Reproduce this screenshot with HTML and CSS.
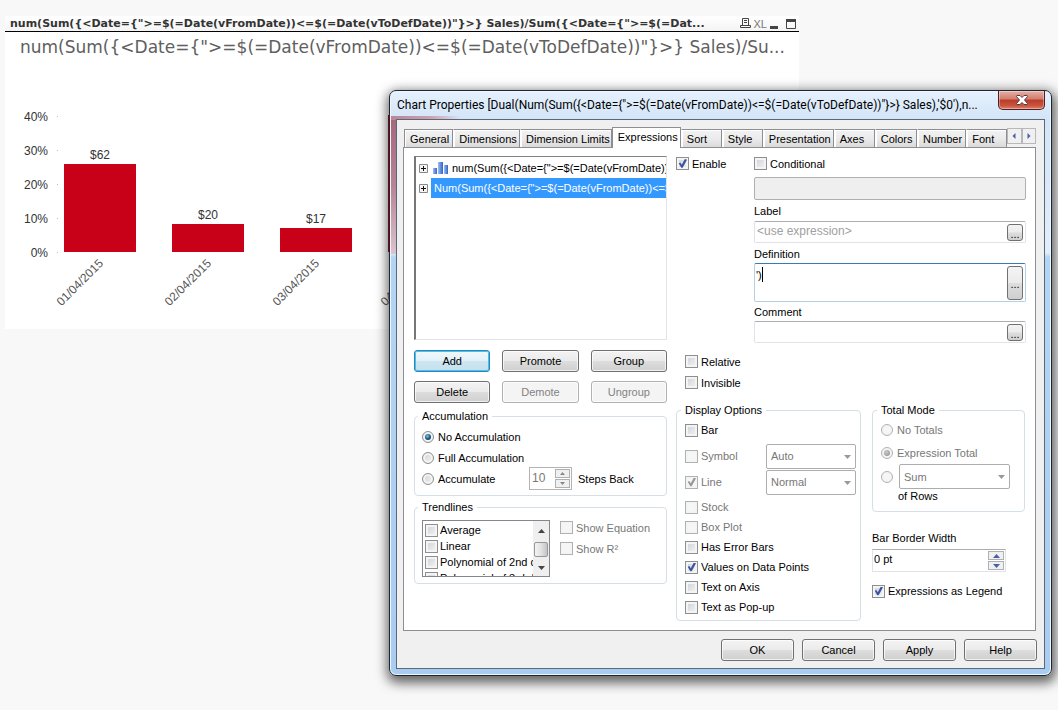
FILE: index.html
```html
<!DOCTYPE html>
<html lang="en">
<head>
<meta charset="utf-8">
<title>Chart Properties</title>
<link rel="stylesheet" href="styles.css">
</head>
<body>
<section class="chart">
  <header class="caption">
    <h1 class="caption-text">num(Sum({&lt;Date={"&gt;=$(=Date(vFromDate))&lt;=$(=Date(vToDefDate))"}&gt;} Sales)/Sum({&lt;Date={"&gt;=$(=Dat...</h1>
    <svg class="caption-icon" width="11" height="11" viewBox="0 0 11 11" fill="none" stroke="#444"><path d="M2.500 7V.5H8.500V7M4 2.500H7M4 4.500H7M.5 7.500H10.500V9.500H.5Z"/></svg>
    <span class="xl">XL</span>
    <svg class="caption-icon wide" width="27" height="11" viewBox="0 0 27 11"><path d="M0 8H8V11H0Z" fill="#444"/><path d="M16.500 2V10.500H25.500V2" fill="none" stroke="#444"/><path d="M16 1H26V4H16Z" fill="#444"/></svg>
  </header>
  <h2 class="chart-title">num(Sum({&lt;Date={"&gt;=$(=Date(vFromDate))&lt;=$(=Date(vToDefDate))"}&gt;} Sales)/Su...</h2>
  <svg class="plot" width="480" height="265" viewBox="5 64 480 265">
    <g fill="#c80018"><path d="M64 164H136V252H64ZM172 224H244V252H172ZM280 228H352V252H280ZM388 115H460V252H388Z"/></g>
    <path d="M57 116.500H58M57 150.500H58M57 184.500H58M57 218.500H58M57 252.500H58" stroke="#bbb"/>
    <g class="axis" text-anchor="end"><text x="48" y="121">40%</text><text x="48" y="155">30%</text><text x="48" y="189">20%</text><text x="48" y="223">10%</text><text x="48" y="257">0%</text></g>
    <g class="axis" text-anchor="middle"><text x="100" y="159">$62</text><text x="208" y="219">$20</text><text x="316" y="223">$17</text></g>
    <g class="dates" text-anchor="end"><text transform="translate(104 264) rotate(-45)">01/04/2015</text><text transform="translate(212 264) rotate(-45)">02/04/2015</text><text transform="translate(320 264) rotate(-45)">03/04/2015</text><text transform="translate(428 264) rotate(-45)">04/04/2015</text></g>
  </svg>
</section>

<main class="dialog">
  <header class="titlebar">
    <h2 class="title">Chart Properties [Dual(Num(Sum({&lt;Date={"&gt;=$(=Date(vFromDate))&lt;=$(=Date(vToDefDate))"}&gt;} Sales),'$0'),n...</h2>
    <button class="close" aria-label="Close"><svg width="14" height="10" viewBox="0 0 14 10"><path d="M2 .5H5L7 2.500L9 .5H12L12.500 1.500L9.500 5L12.500 8.500L12 9.500H9L7 7.500L5 9.500H2L1.500 8.500L4.500 5L1.500 1.500Z" fill="#fff" stroke="#57394a"/></svg></button>
  </header>
  <div class="client">
    <nav class="tabs">
      <button class="tab">General</button><button class="tab">Dimensions</button><button class="tab">Dimension Limits</button><button class="tab selected">Expressions</button><button class="tab">Sort</button><button class="tab">Style</button><button class="tab">Presentation</button><button class="tab">Axes</button><button class="tab">Colors</button><button class="tab">Number</button><button class="tab">Font</button>
      <button class="arrow" aria-label="Scroll tabs left"><svg width="4" height="6"><path d="M3.500 0V6L.5 3Z" fill="#4b5fa8"/></svg></button><button class="arrow" aria-label="Scroll tabs right"><svg width="4" height="6"><path d="M.5 0V6L3.500 3Z" fill="#4b5fa8"/></svg></button>
    </nav>
    <div class="page">
      <div class="left">
        <ul class="tree">
          <li><svg width="9" height="9" viewBox="0 0 9 9"><path d="M.5.5H8.500V8.500H.5Z" fill="#f4f4f4" stroke="#888"/><path d="M2 4.500H7M4.500 2V7" stroke="#111"/></svg><svg class="bars" width="15" height="12" viewBox="0 0 15 12"><defs><linearGradient id="blue" x2="1" y2="0"><stop offset="0" stop-color="#9cc0f5"/><stop offset="1" stop-color="#2f63c4"/></linearGradient></defs><g fill="url(#blue)"><path d="M0 6H4V12H0Z"/><path d="M5 0H10V12H5Z"/><path d="M11 3H15V12H11Z"/></g></svg><span class="expr">num(Sum({&lt;Date={"&gt;=$(=Date(vFromDate))&lt;=$(=Date(vToDefDate))"}&gt;} Sales)</span></li>
          <li><svg width="9" height="9" viewBox="0 0 9 9"><path d="M.5.5H8.500V8.500H.5Z" fill="#f4f4f4" stroke="#888"/><path d="M2 4.500H7M4.500 2V7" stroke="#111"/></svg><span class="expr current">Num(Sum({&lt;Date={"&gt;=$(=Date(vFromDate))&lt;=$(=Date(vToDefDate))"}&gt;} Sales)</span></li>
        </ul>
        <div class="actions">
          <button class="btn default">Add</button><button class="btn">Promote</button><button class="btn">Group</button>
          <button class="btn">Delete</button><button class="btn" disabled>Demote</button><button class="btn" disabled>Ungroup</button>
        </div>
        <fieldset class="group accumulation">
          <legend>Accumulation</legend>
          <label class="opt"><input type="radio" name="acc" checked>No Accumulation</label>
          <label class="opt"><input type="radio" name="acc">Full Accumulation</label>
          <div class="row">
            <label class="opt grow"><input type="radio" name="acc">Accumulate</label>
            <div class="spin off"><input id="steps" type="text" value="10" disabled><span class="steppers"><button disabled aria-label="More"><svg width="5" height="3"><path d="M0 3H5L2.500 0Z"/></svg></button><button disabled aria-label="Fewer"><svg width="5" height="3"><path d="M0 0H5L2.500 3Z"/></svg></button></span></div>
            <label class="steps" for="steps">Steps Back</label>
          </div>
        </fieldset>
        <fieldset class="group trend">
          <legend>Trendlines</legend>
          <div class="row trend-row">
            <div class="list">
              <div class="list-items">
                <label class="opt"><input type="checkbox">Average</label>
                <label class="opt"><input type="checkbox">Linear</label>
                <label class="opt"><input type="checkbox">Polynomial of 2nd d</label>
                <label class="opt"><input type="checkbox">Polynomial of 3rd d</label>
              </div>
              <div class="scroll"><svg width="7" height="4"><path d="M0 4H7L3.500 0Z"/></svg><span class="thumb"></span><svg width="7" height="4"><path d="M0 0H7L3.500 4Z"/></svg></div>
            </div>
            <div class="trend-opts">
              <label class="opt off"><input type="checkbox" disabled>Show Equation</label>
              <label class="opt off"><input type="checkbox" disabled>Show R²</label>
            </div>
          </div>
        </fieldset>
      </div>

      <div class="right">
        <div class="top">
          <label class="opt enable"><input type="checkbox" checked>Enable</label>
          <div class="fields">
            <label class="opt"><input type="checkbox">Conditional</label>
            <input class="box cond" type="text" disabled aria-label="Condition">
            <label class="name" for="lab">Label</label>
            <div class="field"><input class="box" id="lab" type="text" placeholder="&lt;use expression&gt;"><button class="more">...</button></div>
            <label class="name" for="def">Definition</label>
            <div class="field tall"><textarea class="box focus" id="def">')</textarea><span class="caret"></span><button class="more">...</button></div>
            <label class="name" for="com">Comment</label>
            <div class="field"><input class="box" id="com" type="text"><button class="more">...</button></div>
          </div>
        </div>
        <div class="flags">
          <label class="opt"><input type="checkbox">Relative</label>
          <label class="opt"><input type="checkbox">Invisible</label>
        </div>
        <div class="bottom">
          <fieldset class="group display">
            <legend>Display Options</legend>
            <label class="opt high"><input type="checkbox">Bar</label>
            <div class="row high"><label class="opt off grow"><input type="checkbox" disabled>Symbol</label><span class="drop"><select disabled aria-label="Symbol style"><option>Auto</option></select><svg width="7" height="4"><path d="M0 0H7L3.500 4Z"/></svg></span></div>
            <div class="row high"><label class="opt off grow"><input type="checkbox" checked disabled>Line</label><span class="drop"><select disabled aria-label="Line style"><option>Normal</option></select><svg width="7" height="4"><path d="M0 0H7L3.500 4Z"/></svg></span></div>
            <label class="opt off"><input type="checkbox" disabled>Stock</label>
            <label class="opt off"><input type="checkbox" disabled>Box Plot</label>
            <label class="opt"><input type="checkbox">Has Error Bars</label>
            <label class="opt"><input type="checkbox" checked>Values on Data Points</label>
            <label class="opt"><input type="checkbox">Text on Axis</label>
            <label class="opt"><input type="checkbox">Text as Pop-up</label>
          </fieldset>
          <div class="side">
            <fieldset class="group total">
              <legend>Total Mode</legend>
              <label class="opt off"><input type="radio" name="tot" disabled>No Totals</label>
              <label class="opt off"><input type="radio" name="tot" checked disabled>Expression Total</label>
              <div class="row"><input type="radio" name="tot" disabled aria-label="Aggregate of rows"><span class="drop"><select disabled aria-label="Aggregate"><option>Sum</option></select><svg width="7" height="4"><path d="M0 0H7L3.500 4Z"/></svg></span></div>
              <p class="of-rows">of Rows</p>
            </fieldset>
            <label class="name width-name" for="bw">Bar Border Width</label>
            <div class="spin width"><input id="bw" type="text" value="0 pt"><span class="steppers"><button aria-label="Wider"><svg width="7" height="4"><path d="M0 4H7L3.500 0Z"/></svg></button><button aria-label="Narrower"><svg width="7" height="4"><path d="M0 0H7L3.500 4Z"/></svg></button></span></div>
            <label class="opt legend-opt"><input type="checkbox" checked>Expressions as Legend</label>
          </div>
        </div>
      </div>
    </div>
    <footer class="footer"><button class="btn">OK</button><button class="btn">Cancel</button><button class="btn">Apply</button><button class="btn">Help</button></footer>
  </div>
</main>
</body>
</html>
```
FILE: styles.css
```css
* { box-sizing: border-box; }
body {
  margin: 0;
  min-height: 100vh;
  padding: 16px 5px;
  background: #f8f8f8;
  font: 11px/14px "Liberation Sans", Arial, sans-serif;
  color: #000;
  overflow: hidden;
}
h1, h2, p, ul { margin: 0; padding: 0; }
button, input, select, textarea { font: inherit; color: inherit; margin: 0; }
svg { display: block; flex: none; }

/* Chart object */
.chart { max-width: 794px; background: #fff; }
.caption {
  display: flex;
  align-items: center;
  height: 16px;
  padding: 0 2px 0 5px;
  border-bottom: 1px solid #000;
  background: linear-gradient(#fff, #f4f4f4);
}
.caption-text {
  flex: 1;
  white-space: nowrap;
  font: bold 11px/14px "DejaVu Sans", Verdana, sans-serif;
  color: #333;
}
.caption-icon { margin-left: 12px; }
.caption-icon.wide { margin-left: 3px; }
.xl { margin-left: 3px; font-size: 11px; color: #777; }
.chart-title {
  margin: 0 10px 0 15px;
  padding-top: 5px;
  white-space: nowrap;
  font: 17px/20px "DejaVu Sans", Verdana, sans-serif;
  color: #606060;
}
.plot { margin-top: 7px; }
.plot text { font-size: 12px; fill: #333; }
.plot .dates text { fill: #555; }

/* Dialog frame */
.dialog {
  position: absolute;
  top: 90px;
  left: 389px;
  right: 6px;
  padding: 0 6px 6px;
  border: 1px solid #1c2530;
  border-radius: 7px;
  background:
    linear-gradient(90deg, #b58797, #cda3b0 60%, transparent) 0 25px / 70px 4px no-repeat,
    linear-gradient(#a5697c, #b78597 50%, #dcc3ce) 0 29px / 6px 134px no-repeat,
    linear-gradient(#e6f1fd, #d3e5f8 28px, #d9e9fa 100px, #e2eefa 162px, #b3d5f5 166px, #a9cdf0);
  box-shadow: inset 0 0 0 1px #eef7ff, 1px 4px 12px 3px rgba(0, 0, 0, .6);
}
.titlebar { display: flex; align-items: flex-start; height: 28px; }
.title {
  flex: 1;
  padding: 5px 0 0 1px;
  white-space: nowrap;
  font: 12px/18px Roboto, "Open Sans", sans-serif;
}
.close {
  display: flex;
  align-items: center;
  justify-content: center;
  width: 47px;
  height: 19px;
  padding: 0;
  border: 1px solid #4d2026;
  border-top: 0;
  border-radius: 0 0 5px 5px;
  background: linear-gradient(#e7b0a5, #d27b6c 45%, #b93c28 50%, #c9533d 80%, #dd8166);
  box-shadow: inset 0 0 0 1px rgba(255, 255, 255, .35);
}
.client { padding: 7px 7px 7px 6px; border: 1px solid #5a6878; background: #f0f0f0; }

/* Tabs */
.tabs { display: flex; align-items: flex-end; height: 20px; padding: 0 1px; }
.tab {
  height: 18px;
  padding: 0 5px;
  min-width: 41px;
  border: 1px solid #8c8e94;
  border-left-color: #fff;
  border-bottom: 0;
  background: linear-gradient(#f2f2f2, #ebebeb 50%, #dadada);
  text-align: left;
  white-space: nowrap;
  box-shadow: inset 1px 1px #fff;
}
.tab:first-child { border-left-color: #8c8e94; }
.tab.selected {
  position: relative;
  height: 21px;
  margin-bottom: -1px;
  padding: 0 5px 2px;
  border-left-color: #8c8e94;
  background: #fff;
}
.arrow {
  display: flex;
  align-items: center;
  justify-content: center;
  width: 15px;
  height: 16px;
  margin-bottom: 3px;
  padding: 0;
  border: 1px solid #b8b8bc;
  background: #f0f0f0;
}
.tab + .arrow { margin-left: auto; }
.page {
  display: flex;
  gap: 9px;
  margin-right: 1px;
  padding: 8px 9px 9px 10px;
  border: 1px solid #8c8e94;
  background: #fff;
}
.left { flex: none; width: 253px; }
.right { flex: 1; min-width: 0; }

/* Expression tree */
.tree {
  height: 184px;
  padding: 1px 0 0 3px;
  border: 1px solid #e3e3e8;
  border-top-color: #828282;
  border-left: 2px solid #777;
  list-style: none;
  overflow: hidden;
}
.tree li { display: flex; align-items: center; height: 20px; }
.expr { flex: 1; margin-left: 4px; overflow: hidden; white-space: nowrap; }
.expr.current { margin-left: 3px; padding-left: 3px; background: #3399ff; color: #fff; line-height: 20px; }
.bars { margin-left: 5px; }

/* Buttons */
.actions {
  display: grid;
  grid-template-columns: repeat(3, 1fr);
  gap: 9px 12px;
  padding: 10px 0 6px;
}
.btn {
  height: 22px;
  padding: 0;
  border: 1px solid #707070;
  border-radius: 3px;
  background: linear-gradient(#f3f3f3, #ebebeb 48%, #dddddd 52%, #cfcfcf);
  box-shadow: inset 0 0 0 1px rgba(255, 255, 255, .7);
}
.btn.default {
  border-color: #3c7fb1;
  background: linear-gradient(#f0f8fc, #e2f1f9 48%, #cde6f3 52%, #c4e0ee);
  box-shadow: inset 0 0 0 1px #38c7f4;
}
.btn:disabled { border-color: #adb2b5; background: #f4f4f4; color: #838383; }

/* Groups and options */
.group { min-width: 0; margin: 0; padding: 0 8px; border: 1px solid #d5dfe5; border-radius: 4px; }
.group legend { margin-left: -4px; padding: 0 4px; height: 14px; }
.row { display: flex; align-items: center; }
.grow { flex: 1; }
.opt { display: flex; align-items: center; gap: 3px; height: 20px; white-space: nowrap; }
.off { color: #777; }
input[type="checkbox"], input[type="radio"] {
  appearance: none;
  flex: none;
  position: relative;
  width: 13px;
  height: 13px;
  border: 1px solid #8e8f8f;
  background: linear-gradient(135deg, #cbcfd5, #f6f6f6);
  box-shadow: inset 0 0 0 2px #f4f4f4;
}
input[type="radio"] { width: 12px; height: 12px; border-radius: 50%; }
input[type="checkbox"]:disabled, input[type="radio"]:disabled { border-color: #b1b1b1; background: #f6f6f6; }
input[type="checkbox"]:checked::before {
  content: "";
  position: absolute;
  inset: 1px;
  background: #3b53a0;
  clip-path: polygon(8% 48%, 26% 40%, 42% 64%, 76% 0, 100% 8%, 52% 98%, 36% 98%);
}
input[type="checkbox"]:checked:disabled::before { background: #999; }
input[type="radio"]:checked::before {
  content: "";
  position: absolute;
  inset: 2px;
  border-radius: 50%;
  background: radial-gradient(circle at 40% 35%, #7cc8e6, #1f5e88 50%, #102a44);
}
input[type="radio"]:checked:disabled::before { background: radial-gradient(circle at 40% 35%, #ccc, #888); }

.accumulation { padding: 3px 7px 6px; }
.accumulation .opt { height: 21px; gap: 4px; }
.accumulation .row { height: 21px; }
.steps { width: 87px; padding-left: 6px; }
.spin { display: flex; height: 23px; border: 1px solid #e2e3ea; border-top-color: #abadb3; background: #fff; }
.spin input { flex: 1; min-width: 0; width: 22px; padding: 0 1px 4px; border: 0; background: none; }
.spin.off { width: 43px; border-color: #b4b4b4; }
.spin.off input { padding: 0 2px 2px; font-size: 12px; color: #777; }
.steppers { display: flex; flex-direction: column; gap: 1px; width: 17px; padding: 1px; }
.steppers button {
  display: flex;
  flex: 1;
  align-items: center;
  justify-content: center;
  padding: 0;
  border: 1px solid #b0b0b4;
  background: #f0f0f0;
}
.steppers path { fill: #4b5fa8; }
.off .steppers path { fill: #888; }
.trend { margin-top: 4px; padding: 6px 7px; }
.trend-row { align-items: flex-start; gap: 10px; }
.list { display: flex; width: 128px; height: 57px; border: 1px solid #828790; overflow: hidden; }
.list-items { flex: 1; min-width: 0; padding: 1px 0 0 2px; overflow: hidden; }
.list .opt { height: 16px; gap: 2px; }
.scroll {
  display: flex;
  flex-direction: column;
  align-items: center;
  justify-content: space-between;
  width: 16px;
  padding: 8px 0 6px;
  background: #efefef;
}
.scroll path { fill: #444; }
.thumb { width: 14px; height: 15px; border: 1px solid #979797; border-radius: 2px; background: linear-gradient(90deg, #f3f3f3, #e2e2e2 50%, #c4c4c8); }
.trend-opts .opt { height: 21px; }
.trend-opts { margin-top: -3px; }

/* Expression fields */
.top { display: flex; }
.enable { width: 78px; height: 15px; }
.fields { flex: 1; min-width: 0; }
.fields .opt { height: 15px; }
.box {
  display: block;
  width: 100%;
  height: 22px;
  padding: 0 2px 3px;
  border: 1px solid #e2e3ea;
  border-top-color: #abadb3;
  border-radius: 2px;
  background: #fff;
}
.cond { height: 23px; margin: 6px 0 1px; border-color: #afafaf; background: #efefef; }
#lab { font-size: 12px; }
.box::placeholder { color: #a0a0a0; }
.name { display: block; padding: 3px 0; }
.field { position: relative; }
.field + .name { padding: 4px 0 2px; }
.field.tall + .name { padding: 3px 0 2px; }
.field.tall .box { height: 39px; }
textarea.box { padding: 4px 1px; resize: none; overflow: hidden; }
.box.focus { border-color: #b5cfe7; border-top-color: #3d7bad; }
.caret { position: absolute; left: 8px; top: 4px; width: 1px; height: 15px; background: #000; }
.more {
  position: absolute;
  top: 3px;
  right: 3px;
  bottom: 2px;
  width: 16px;
  padding: 2px 0 0;
  border: 1px solid #707070;
  border-radius: 3px;
  background: linear-gradient(#f3f3f3, #ebebeb 48%, #dddddd 52%, #cfcfcf);
}
.flags { padding: 8px 9px 10px; }
.flags .opt { height: 21px; }
.bottom { display: flex; align-items: flex-start; gap: 11px; }
.display { width: 185px; padding: 0 4px 3px 8px; }
.display .high { height: 26px; }
.display .row + .opt { margin-top: 2px; }
.drop { position: relative; width: 90px; }
.drop select {
  display: block;
  appearance: none;
  width: 100%;
  height: 25px;
  padding: 0 4px;
  border: 1px solid #adadad;
  border-radius: 2px;
  background: #fff;
  color: #777;
  opacity: 1;
}
.drop svg { position: absolute; right: 5px; top: 11px; fill: #999; }
.side { width: 153px; }
.total { padding: 1px 8px 8px; }
.total .opt { height: 23px; gap: 4px; }
.total .row { gap: 6px; }
.total .drop { width: 111px; }
.of-rows { padding-left: 17px; }
.width-name { padding: 19px 0 4px; }
.spin.width { width: 134px; }
.spin.width .steppers { width: 18px; }
.legend-opt { margin-top: 9px; }

.footer { display: flex; justify-content: flex-end; gap: 8px; padding-top: 8px; }
.footer .btn { width: 73px; }
```
